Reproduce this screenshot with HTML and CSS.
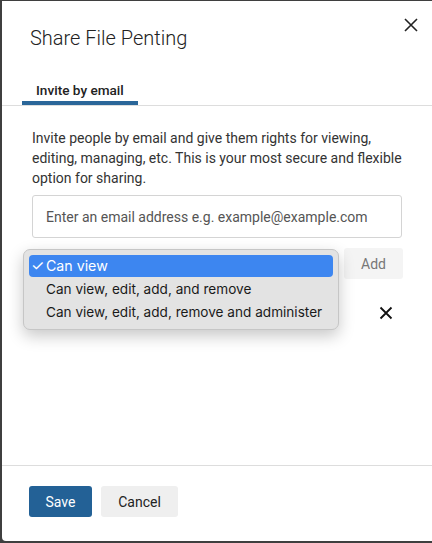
FILE: index.html
```html
<!DOCTYPE html>
<html>
<head>
<meta charset="utf-8">
<link rel="stylesheet" href="styles.css">
</head>
<body>
<div class="dialog">
  <header class="head">
    <h1 class="title">Share File Penting</h1>
    <button class="close" aria-label="Close">
      <svg width="14" height="14" viewBox="0 0 14 14"><path d="M1 1L13 13M13 1L1 13" stroke="#222" stroke-width="1.6" fill="none"/></svg>
    </button>
  </header>
  <nav class="tabs">
    <div class="tab active">Invite by email</div>
  </nav>
  <section class="body">
    <p class="desc">Invite people by email and give them rights for viewing, editing, managing, etc. This is your most secure and flexible option for sharing.</p>
    <div class="input">Enter an email address e.g. example@example.com</div>
    <div class="row">
      <div class="select-slot">
        <ul class="menu">
          <li class="opt sel"><span class="check">✓</span>Can view</li>
          <li class="opt">Can view, edit, add, and remove</li>
          <li class="opt">Can view, edit, add, remove and administer</li>
        </ul>
      </div>
      <button class="add">Add</button>
    </div>
    <div class="row2">
      <span class="x">
        <svg width="14" height="14" viewBox="0 0 14 14"><path d="M1.5 1.5L12.5 12.5M12.5 1.5L1.5 12.5" stroke="#111" stroke-width="1.8" fill="none"/></svg>
      </span>
    </div>
  </section>
  <footer class="foot">
    <button class="btn save">Save</button>
    <button class="btn cancel">Cancel</button>
  </footer>
</div>
</body>
</html>
```
FILE: styles.css
```css
* { box-sizing: border-box; }
html, body { margin: 0; padding: 0; }
body {
  background: #3f3f3f;
  width: 432px;
  height: 543px;
  overflow: hidden;
  font-family: Roboto, "Liberation Sans", sans-serif;
  color: #333;
}
.dialog {
  margin: 1px 0 0 2px;
  height: 540px;
  background: #fff;
  border-radius: 0 0 0 4px;
  display: flex;
  flex-direction: column;
}
.head {
  display: flex;
  justify-content: space-between;
  align-items: flex-start;
  padding: 0 12px 0 28px;
}
.title {
  margin: 23px 0 0;
  font-size: 20px;
  font-weight: 300;
  line-height: 28px;
  color: #222;
}
.close {
  margin-top: 15px;
  border: 0;
  background: none;
  padding: 0;
  width: 18px;
  height: 18px;
  display: flex;
  align-items: center;
  justify-content: center;
}
.tabs {
  margin-top: 23px;
  padding-left: 20px;
  border-bottom: 1px solid #ddd;
  display: flex;
}
.tab {
  font-size: 13.6px;
  font-weight: 500;
  color: #222;
  padding: 7px 14px 2px;
  line-height: 17px;
}
.tab.active { border-bottom: 4px solid #2a6699; }
.body {
  padding: 0 30px 0 30px;
}
.desc {
  margin: 22px 0 0;
  font-size: 14px;
  line-height: 20px;
  color: #333;
}
.input {
  margin-top: 7px;
  height: 43px;
  border: 1px solid #d4d4d4;
  border-radius: 3px;
  padding: 0 13px;
  display: flex;
  align-items: center;
  font-size: 14px;
  color: #555;
}
.row {
  margin-top: 10px;
  display: flex;
  justify-content: space-between;
  align-items: flex-start;
}
.select-slot {
  position: relative;
  width: 300px;
  height: 30px;
}
.menu {
  position: absolute;
  left: -9px;
  top: 1px;
  width: 316px;
  margin: 0;
  padding: 5px 5px;
  list-style: none;
  background: #e3e3e3;
  border: 1px solid #c6c6c6;
  border-radius: 7px;
  box-shadow: 0 6px 16px rgba(0,0,0,0.22);
  font-family: Inter, "Noto Sans", sans-serif;
  font-size: 13.6px;
  color: #1a1a1a;
  z-index: 2;
}
.opt {
  height: 22px;
  line-height: 22px;
  padding-left: 17px;
  border-radius: 4px;
  margin-bottom: 1px;
  position: relative;
}
.opt.sel {
  background: #3d86f0;
  color: #fff;
  font-size: 14.2px;
}
.check {
  position: absolute;
  left: 2px;
  font-size: 15px;
}
.add {
  width: 59px;
  height: 31px;
  border: 0;
  border-radius: 3px;
  background: #f4f4f4;
  color: #777;
  font-family: Roboto, "Liberation Sans", sans-serif;
  font-size: 14px;
  margin-right: -1px;
}
.row2 {
  display: flex;
  justify-content: flex-end;
  margin-top: 27px;
  padding-right: 9px;
}
.x { display: flex; }
.foot {
  margin-top: auto;
  border-top: 1px solid #ddd;
  padding: 20px 27px 24px;
  display: flex;
  gap: 9px;
}
.btn {
  height: 31px;
  border: 0;
  border-radius: 3px;
  font-family: Roboto, "Liberation Sans", sans-serif;
  font-size: 14px;
}
.save {
  width: 63px;
  background: #236196;
  color: #fff;
}
.cancel {
  width: 77px;
  background: #efefef;
  color: #222;
}
```
